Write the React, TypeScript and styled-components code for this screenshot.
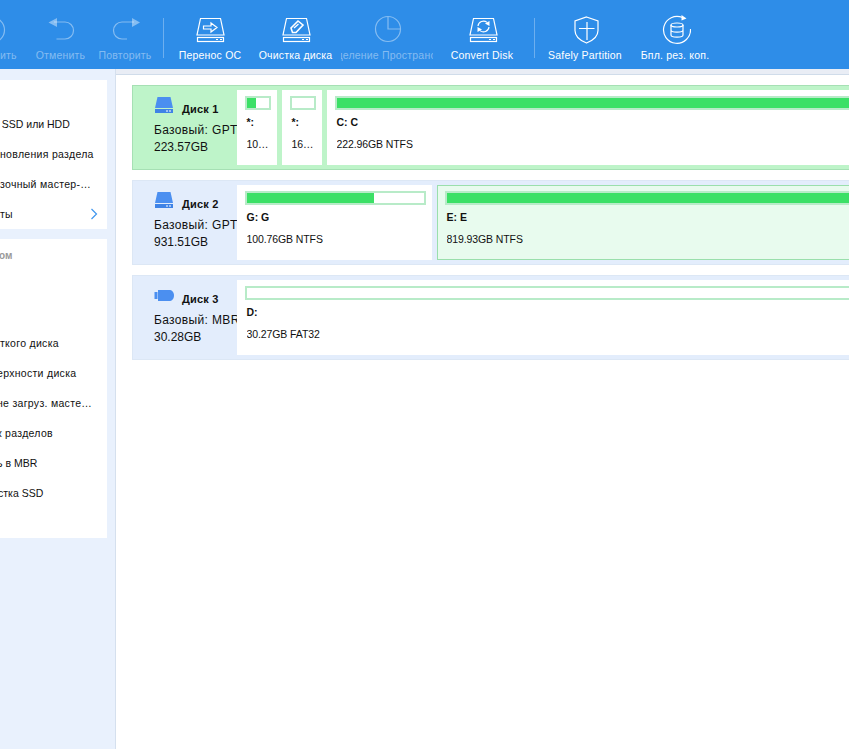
import React from "react";
import styled, { createGlobalStyle } from "styled-components";

const Global = createGlobalStyle`
  html, body { margin: 0; padding: 0; background: #fff; }
  #root { width: 849px; height: 749px; overflow: hidden; }
  * { box-sizing: border-box; }
`;

const Page = styled.div`
  width: 849px;
  height: 749px;
  overflow: hidden;
  display: flex;
  flex-direction: column;
  font-family: "Liberation Sans", Arial, sans-serif;
  font-size: 11px;
  color: #111;
`;

const Toolbar = styled.div`
  flex: 0 0 69px;
  display: flex;
  background: #2e8de8;
  margin-left: -37px;
`;

const Tool = styled.div<{ $w: number; $off?: boolean; $ml?: number }>`
  flex: 0 0 ${(p) => p.$w}px;
  width: ${(p) => p.$w}px;
  margin-left: ${(p) => p.$ml ?? 0}px;
  overflow: hidden;
  display: flex;
  flex-direction: column;
  align-items: center;
  padding-top: 14px;
  color: ${(p) => (p.$off ? "rgba(255,255,255,0.42)" : "#fff")};
`;

const ToolIcon = styled.svg`
  width: 32px;
  height: 32px;
  flex: none;
  fill: none;
  stroke: currentColor;
  stroke-width: 1.2;
`;

const ToolLabel = styled.div`
  margin-top: 2px;
  line-height: 14px;
  font-size: 10.5px;
  letter-spacing: 0.2px;
  white-space: nowrap;
`;

const ToolDivider = styled.div<{ $l: number; $r: number }>`
  flex: none;
  width: 1px;
  height: 40px;
  margin: 18px ${(p) => p.$r}px 0 ${(p) => p.$l}px;
  background: rgba(255, 255, 255, 0.3);
`;

const Body = styled.div`
  flex: 1;
  display: flex;
  min-height: 0;
`;

const Sidebar = styled.aside`
  flex: 0 0 116px;
  background: #e9f1fd;
  border-right: 1px solid #d5e0ee;
  padding: 11px 8px 0 0;
  display: flex;
  flex-direction: column;
  gap: 10px;
`;

const Panel = styled.div<{ $top: number }>`
  background: #fff;
  padding: ${(p) => p.$top}px 0 ${(p) => (p.$top > 20 ? 0 : 30)}px;
`;

const PanelTitle = styled.div`
  height: 29px;
  margin-left: -1px;
  padding-top: 1px;
  line-height: 14px;
  font-size: 10px;
  font-weight: bold;
  color: #9a9a9a;
  overflow: hidden;
`;

const Gap = styled.div`
  height: 51px;
`;

const Row = styled.div`
  height: 30px;
  display: flex;
  align-items: center;
  justify-content: space-between;
  padding-right: 9px;
  font-size: 10.5px;
  white-space: nowrap;
  overflow: hidden;
`;

const RowText = styled.span<{ $x?: number; $ls?: number }>`
  margin-left: ${(p) => p.$x ?? 0}px;
  letter-spacing: ${(p) => p.$ls ?? 0.3}px;
`;

const Main = styled.main`
  flex: 1;
  min-width: 0;
  overflow: hidden;
  display: flex;
  flex-direction: column;
`;

const Strip = styled.div`
  flex: 0 0 6px;
  background: #e9edf5;
  border-bottom: 1px solid #d0dcea;
`;

const Disks = styled.div`
  padding: 10px 0 0 16px;
  display: flex;
  flex-direction: column;
  gap: 10px;
`;

const Disk = styled.section<{ $active?: boolean }>`
  width: 1000px;
  height: 85px;
  display: flex;
  padding: 4px 4px 4px 0;
  background: ${(p) => (p.$active ? "#bef4c9" : "#e3edfc")};
  border: 1px solid ${(p) => (p.$active ? "#a6e0b4" : "#dce7f5")};
`;

const DiskInfo = styled.div`
  flex: 0 0 104px;
  overflow: hidden;
  padding: 5px 0 0 21px;
  font-size: 12px;
  white-space: nowrap;
`;

const DiskHead = styled.div`
  display: flex;
  align-items: center;
  gap: 8px;
  height: 24px;
  margin-bottom: 3px;
`;

const DiskName = styled.div`
  font-size: 11px;
  font-weight: bold;
  letter-spacing: 0.2px;
  margin-top: 4px;
`;

const DiskType = styled.div`
  line-height: 17px;
  letter-spacing: 0.35px;
`;

const DiskCapacity = styled.div`
  line-height: 17px;
`;

const Parts = styled.div`
  flex: 1;
  display: flex;
  gap: 5px;
  min-width: 0;
`;

const Part = styled.div<{ $w?: number; $sel?: boolean }>`
  ${(p) => (p.$w ? `flex: 0 0 ${p.$w}px;` : "flex: 1;")}
  min-width: 0;
  padding: ${(p) => (p.$sel ? "5px 5px 0 7px" : "6px 6px 0 8px")};
  background: ${(p) => (p.$sel ? "#e8fbee" : "#fff")};
  ${(p) => (p.$sel ? "border: 1px solid #9adfac;" : "")}
`;

const Bar = styled.div`
  height: 14px;
  border: 2px solid #b8ebc8;
  background: #fff;
`;

const Fill = styled.div<{ $pct: number }>`
  height: 100%;
  width: ${(p) => p.$pct}%;
  background: #3be066;
`;

const PartName = styled.div`
  margin: 5px 0 0 1.5px;
  line-height: 14px;
  font-size: 10.5px;
  font-weight: bold;
`;

const PartSize = styled.div`
  margin: 8px 0 0 1.5px;
  line-height: 14px;
  font-size: 10.5px;
  letter-spacing: -0.1px;
  white-space: nowrap;
  overflow: hidden;
  text-overflow: ellipsis;
`;

const Chevron = styled.svg`
  width: 8px;
  height: 12px;
  flex: none;
  fill: none;
  stroke: #3f96ee;
  stroke-width: 1.2;
`;

const DiskGlyph = styled.svg`
  width: 20px;
  height: 17px;
  flex: none;
  margin-top: -3px;
`;

const DriveBase = () => (
  <>
    <path d="M6.5 4.5H26.5L30 21H3Z" />
    <rect x="3.5" y="23.5" width="26" height="4" />
    <path d="M22 25.5h2M26 25.5h2" />
  </>
);

const Icons = {
  remove: <circle cx="12" cy="16" r="12.5" />,
  undo: (
    <>
      <path d="M9 8H20a8.5 8.5 0 0 1 0 17H11.5" />
      <path d="M3.5 8.5L12 4V13Z" fill="currentColor" stroke="none" />
    </>
  ),
  redo: (
    <>
      <path d="M25 8H13a8.5 8.5 0 0 0 0 17H18" />
      <path d="M31 8.5L23 4V13Z" fill="currentColor" stroke="none" />
    </>
  ),
  migrate: (
    <>
      <DriveBase />
      <path d="M9.5 12H17V9L23 13.5L17 18V15H9.5Z" />
    </>
  ),
  wipe: (
    <>
      <DriveBase />
      <path d="M11 14L18 7L23 11L16 18.5H12.5Z" strokeWidth="1.6" />
      <path d="M14 14L18.5 10" strokeWidth="1.4" />
    </>
  ),
  pie: (
    <>
      <circle cx="17" cy="15" r="12.5" />
      <path d="M17 3V15H29" />
    </>
  ),
  convert: (
    <g transform="translate(1 0)">
      <DriveBase />
      <path d="M11 12a5.5 5.5 0 0 1 9-3.6M22 13a5.5 5.5 0 0 1-9 3.6" />
      <path d="M18 9.5L22.5 7V12ZM15 15.5L10.5 18V13Z" fill="currentColor" stroke="none" />
    </g>
  ),
  shield: (
    <>
      <path d="M17.5 3L29 7V16.5C29 22.5 24 26.5 17.5 29C11 26.5 6 22.5 6 16.5V7Z" />
      <path d="M18 8V26M10 14.5H25.5" />
    </>
  ),
  backup: (
    <>
      <path d="M23.5 3.5A13.5 13.5 0 1 0 31.5 15" />
      <path d="M22.5 1L27.5 4.5L22.5 6.5Z" fill="currentColor" stroke="none" />
      <ellipse cx="18" cy="11" rx="6" ry="2" />
      <path d="M12 11V21C12 22.4 15 23.2 18 23.2S24 22.4 24 21V11M12 16C12 17.4 15 18.2 18 18.2S24 17.4 24 16" />
    </>
  ),
};

type ToolDef = { w: number; label: string; icon: keyof typeof Icons; off?: boolean; ml?: number };

const tools: ToolDef[] = [
  { w: 66, label: "Удалить", icon: "remove", off: true },
  { w: 63, label: "Отменить", icon: "undo", off: true },
  { w: 66, label: "Повторить", icon: "redo", off: true },
];
const tools2: ToolDef[] = [
  { w: 86, label: "Перенос ОС", icon: "migrate" },
  { w: 85, label: "Очистка диска", icon: "wipe" },
  { w: 92, label: "Выделение Пространства", icon: "pie", off: true, ml: 3 },
  { w: 98, label: "Convert Disk", icon: "convert" },
];
const tools3: ToolDef[] = [
  { w: 96, label: "Safely Partition", icon: "shield" },
  { w: 84, label: "Бпл. рез. коп.", icon: "backup" },
];

const ToolItem = ({ t }: { t: ToolDef }) => (
  <Tool $w={t.w} $off={t.off} $ml={t.ml}>
    <ToolIcon viewBox="0 0 32 32">{Icons[t.icon]}</ToolIcon>
    <ToolLabel>{t.label}</ToolLabel>
  </Tool>
);

const DriveGlyph = () => (
  <DiskGlyph viewBox="0 0 20 17">
    <path d="M3.5 0H16.5L19 11H1Z" fill="#4b8ff0" />
    <path d="M1 12H19V16H1Z" fill="#3f83e6" />
    <path d="M12 14h2M15 14h2" stroke="#fff" />
  </DiskGlyph>
);

const UsbGlyph = () => (
  <DiskGlyph viewBox="0 0 20 17">
    <path d="M4 3H15C18 3 20 5 20 8.5C20 12 18 14 15 14H4Z" fill="#4b8ff0" />
    <path d="M0.5 5H3.5V12H0.5Z" fill="#4b8ff0" />
  </DiskGlyph>
);

export default function App() {
  return (
    <Page>
      <Global />
      <Toolbar>
        {tools.map((t) => (
          <ToolItem key={t.label} t={t} />
        ))}
        <ToolDivider $l={5} $r={3} />
        {tools2.map((t) => (
          <ToolItem key={t.label} t={t} />
        ))}
        <ToolDivider $l={3} $r={2} />
        {tools3.map((t) => (
          <ToolItem key={t.label} t={t} />
        ))}
      </Toolbar>
      <Body>
        <Sidebar>
          <Panel $top={29}>
            <Row>
              <RowText $x={-7} $ls={0}>а SSD или HDD</RowText>
            </Row>
            <Row>
              <RowText>новления раздела</RowText>
            </Row>
            <Row>
              <RowText>зочный мастер-…</RowText>
            </Row>
            <Row>
              <RowText>ты</RowText>
              <Chevron viewBox="0 0 8 12">
                <path d="M1.5 1L6.5 6L1.5 11" />
              </Chevron>
            </Row>
          </Panel>
          <Panel $top={9}>
            <PanelTitle>ом</PanelTitle>
            <Gap />
            <Row>
              <RowText>ткого диска</RowText>
            </Row>
            <Row>
              <RowText $x={-3}>ерхности диска</RowText>
            </Row>
            <Row>
              <RowText $x={-3}>не загруз. масте…</RowText>
            </Row>
            <Row>
              <RowText $x={-3}>к разделов</RowText>
            </Row>
            <Row>
              <RowText $x={-3} $ls={0}>ь в MBR</RowText>
            </Row>
            <Row>
              <RowText $x={-2} $ls={0}>стка SSD</RowText>
            </Row>
          </Panel>
        </Sidebar>
        <Main>
          <Strip />
          <Disks>
            <Disk $active>
              <DiskInfo>
                <DiskHead>
                  <DriveGlyph />
                  <DiskName>Диск 1</DiskName>
                </DiskHead>
                <DiskType>Базовый: GPT</DiskType>
                <DiskCapacity>223.57GB</DiskCapacity>
              </DiskInfo>
              <Parts>
                <Part $w={40}>
                  <Bar>
                    <Fill $pct={40} />
                  </Bar>
                  <PartName>*:</PartName>
                  <PartSize>100.00MB FAT32</PartSize>
                </Part>
                <Part $w={40}>
                  <Bar>
                    <Fill $pct={0} />
                  </Bar>
                  <PartName>*:</PartName>
                  <PartSize>16.00MB Other</PartSize>
                </Part>
                <Part>
                  <Bar>
                    <Fill $pct={100} />
                  </Bar>
                  <PartName>C: C</PartName>
                  <PartSize>222.96GB NTFS</PartSize>
                </Part>
              </Parts>
            </Disk>
            <Disk>
              <DiskInfo>
                <DiskHead>
                  <DriveGlyph />
                  <DiskName>Диск 2</DiskName>
                </DiskHead>
                <DiskType>Базовый: GPT</DiskType>
                <DiskCapacity>931.51GB</DiskCapacity>
              </DiskInfo>
              <Parts>
                <Part $w={195}>
                  <Bar>
                    <Fill $pct={72} />
                  </Bar>
                  <PartName>G: G</PartName>
                  <PartSize>100.76GB NTFS</PartSize>
                </Part>
                <Part $sel>
                  <Bar>
                    <Fill $pct={100} />
                  </Bar>
                  <PartName>E: E</PartName>
                  <PartSize>819.93GB NTFS</PartSize>
                </Part>
              </Parts>
            </Disk>
            <Disk>
              <DiskInfo>
                <DiskHead>
                  <UsbGlyph />
                  <DiskName>Диск 3</DiskName>
                </DiskHead>
                <DiskType>Базовый: MBR</DiskType>
                <DiskCapacity>30.28GB</DiskCapacity>
              </DiskInfo>
              <Parts>
                <Part>
                  <Bar>
                    <Fill $pct={0} />
                  </Bar>
                  <PartName>D:</PartName>
                  <PartSize>30.27GB FAT32</PartSize>
                </Part>
              </Parts>
            </Disk>
          </Disks>
        </Main>
      </Body>
    </Page>
  );
}
